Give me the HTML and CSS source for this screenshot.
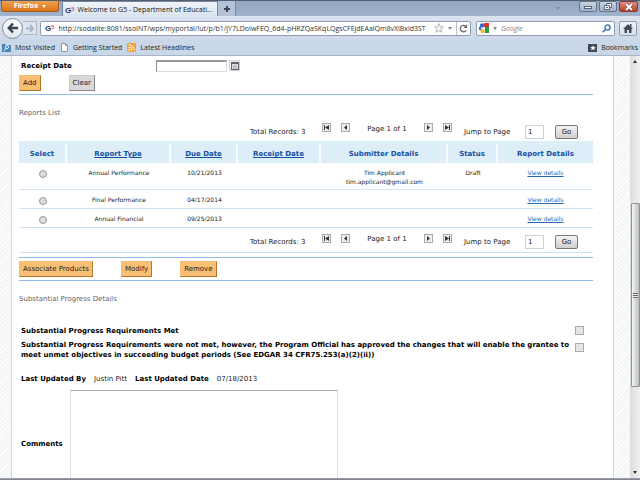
FILE: index.html
```html
<!DOCTYPE html>
<html lang="en">
<head>
  <meta charset="utf-8">
  <title>Welcome to G5 - Department of Education</title>
  <link rel="stylesheet" href="styles.css">
</head>
<body>
  <!-- browser chrome -->
  <header class="titlebar">
    <button class="firefox">Firefox <span class="caret"></span></button>
    <div class="tab"><span class="g5">G<sup>5</sup></span><span class="tab-title">Welcome to G5 - Department of Educati...</span></div>
    <button class="newtab" aria-label="New tab">
      <svg width="8" height="8" viewBox="0 0 8 8"><path d="M4 1v6M1 4h6" stroke="#3c4654" stroke-width="2"/></svg>
    </button>
    <span class="caret tabs-caret"></span>
    <div class="window-buttons">
      <button aria-label="Minimize"><svg width="10" height="8" viewBox="0 0 10 8"><rect x="1.500" y="3.500" width="7" height="2" fill="#fff" stroke="#596373"/></svg></button>
      <button aria-label="Restore"><svg width="10" height="8" viewBox="0 0 10 8"><path d="M3.500.500h5v4h-5z" fill="#fff" stroke="#596373"/><path d="M1.500 2.500h5v4h-5z" fill="#fff" stroke="#596373"/><path d="M3 4.500h2" stroke="#596373"/></svg></button>
      <button class="close" aria-label="Close"><svg width="10" height="8" viewBox="0 0 10 8"><path d="M2 1l6 6M8 1l-6 6" stroke="#7c332c" stroke-width="3"/><path d="M2 1l6 6M8 1l-6 6" stroke="#fff" stroke-width="2"/></svg></button>
    </div>
  </header>
  <nav class="navbar">
    <button class="back" aria-label="Back"><svg width="12" height="12" viewBox="0 0 12 12"><path d="M6 1.500L1.800 6L6 10.500M2 6h9" fill="none" stroke="#3b434f" stroke-width="2.400"/></svg></button>
    <button class="forward" aria-label="Forward"><svg width="8" height="9" viewBox="0 0 8 9"><path d="M4 1l3 3.500L4 8M0 4.500h6" fill="none" stroke="#a9b4c3" stroke-width="2"/></svg></button>
    <div class="urlbar">
      <span class="g5">G<sup>5</sup></span>
      <input type="text" aria-label="Address" value="http://sodalite:8081/ssoINT/wps/myportal/!ut/p/b1/jY7LDoIwFEQ_6d4-pHRZQaSKqLQgsCFEjdEAaiQm8vXiBxid3ST">
      <svg width="10" height="10" viewBox="0 0 10 10"><path d="M5 .6l1.300 3 3.200.3-2.400 2.200.7 3.200L5 7.600 2.200 9.300l.7-3.200L.5 3.900l3.200-.3z" fill="#f3f3f3" stroke="#a5a9ae" stroke-width=".8"/></svg>
      <span class="caret"></span>
      <button class="reload" aria-label="Reload"><svg width="9" height="9" viewBox="0 0 9 9"><path d="M7.300 6.200A3.200 3.200 0 1 1 6.600 2.200" fill="none" stroke="#5c6168" stroke-width="1.200"/><path d="M8 .5v3.500H4.600z" fill="#5c6168"/></svg></button>
    </div>
    <div class="searchbar">
      <svg width="10" height="10" viewBox="0 0 10 10"><rect width="10" height="10" fill="#fff"/><rect x="5" width="5" height="4" fill="#e0322b"/><rect x="6" y="4" width="4" height="6" fill="#2a9a45"/><circle cx="3" cy="2.500" r="2.200" fill="#2f66c9"/><circle cx="3.500" cy="8" r="2.200" fill="#f3b82c"/><rect y="4" width="2" height="3" fill="#2f66c9"/></svg>
      <span class="caret"></span>
      <input type="text" aria-label="Search" placeholder="Google">
      <svg width="9" height="9" viewBox="0 0 9 9"><circle cx="5.500" cy="3.500" r="2.600" fill="none" stroke="#3a6cb4" stroke-width="1.300"/><path d="M3.500 5.500L.8 8.200" stroke="#3a6cb4" stroke-width="1.600"/></svg>
    </div>
    <button class="home" aria-label="Home"><svg width="10" height="9" viewBox="0 0 10 9"><path d="M5 0l5 5H8.500v4h-2.500V6H4v3H1.500V5H0z" fill="#444b57"/><path d="M7 0h1.500v3H7z" fill="#444b57"/></svg></button>
  </nav>
  <div class="bookmarks">
    <a href="#"><svg width="9" height="9" viewBox="0 0 9 9"><path d="M0 1h3l1 1h5v7H0z" fill="#4c86b8"/><circle cx="5" cy="4" r="1.600" fill="none" stroke="#e8f2fa"/><path d="M4 5L2 8" stroke="#e8f2fa"/></svg>Most Visited</a>
    <a href="#"><svg width="9" height="9" viewBox="0 0 9 9"><path d="M1.500.500h4l2 2v6h-6z" fill="#fff" stroke="#8e98a6"/><path d="M5.500.500v2h2" fill="none" stroke="#8e98a6"/></svg>Getting Started</a>
    <a href="#"><svg width="9" height="9" viewBox="0 0 9 9"><rect width="9" height="9" rx="1" fill="#f0a33c"/><circle cx="2.200" cy="6.800" r=".9" fill="#fff"/><path d="M1.500 4a3.500 3.500 0 0 1 3.500 3.500M1.500 1.700A5.800 5.800 0 0 1 7.300 7.500" fill="none" stroke="#fff"/></svg>Latest Headlines</a>
    <a href="#" class="bookmarks-menu"><svg width="9" height="8" viewBox="0 0 9 8"><rect width="9" height="8" fill="#414b58"/><path d="M5 1.300l.8 1.700 1.900.2-1.400 1.200.4 1.900L5 5.300l-1.700 1 .4-1.900-1.400-1.200 1.900-.2z" fill="#fff"/></svg>Bookmarks</a>
  </div>

  <!-- page -->
  <div class="viewport">
    <main class="page">
      <form class="filter">
        <div class="field">
          <label for="receipt">Receipt Date</label>
          <input type="text" id="receipt">
          <button type="button" class="calendar" aria-label="Pick date"><svg width="8" height="8" viewBox="0 0 8 8"><rect x=".5" y=".5" width="7" height="7" fill="#ddd" stroke="#666"/><path d="M0 1h8" stroke="#666" stroke-width="2"/><path d="M2 4h4M2 6h4" stroke="#aaa"/></svg></button>
        </div>
        <div class="actions">
          <button type="button" class="btn">Add</button>
          <button type="button" class="btn gray">Clear</button>
        </div>
      </form>

      <h2 class="reports-title">Reports List</h2>
      <div class="pager">
        <span class="total">Total Records: 3</span>
        <div class="steps">
          <button aria-label="First page"><svg width="7" height="7" viewBox="0 0 7 7"><path d="M1 1h1v5H1zM6 1v5L2 3.500z" fill="#333"/></svg></button>
          <button aria-label="Previous page"><svg width="7" height="7" viewBox="0 0 7 7"><path d="M5 1v5L2 3.500z" fill="#333"/></svg></button>
          <span>Page 1 of 1</span>
          <button aria-label="Next page"><svg width="7" height="7" viewBox="0 0 7 7"><path d="M2 1v5l3-2.500z" fill="#333"/></svg></button>
          <button aria-label="Last page"><svg width="7" height="7" viewBox="0 0 7 7"><path d="M5 1h1v5H5zM1 1v5l4-2.500z" fill="#333"/></svg></button>
        </div>
        <label for="jump-top">Jump to Page</label>
        <input type="text" id="jump-top" value="1">
        <button class="go">Go</button>
      </div>
      <table class="reports">
        <thead>
          <tr>
            <th class="c-select"><span>Select</span></th>
            <th class="c-type"><span><a href="#">Report Type</a></span></th>
            <th class="c-due"><span><a href="#">Due Date</a></span></th>
            <th class="c-receipt"><span><a href="#">Receipt Date</a></span></th>
            <th class="c-submitter"><span>Submitter Details</span></th>
            <th class="c-status"><span>Status</span></th>
            <th><span>Report Details</span></th>
          </tr>
        </thead>
        <tbody>
          <tr>
            <td><input type="radio" name="report" aria-label="Annual Performance"></td>
            <td>Annual Performance</td><td>10/21/2013</td><td></td>
            <td>Tim Applicant<br>tim.applicant@gmail.com</td><td>Draft</td>
            <td><a href="#">View details</a></td>
          </tr>
          <tr>
            <td><input type="radio" name="report" aria-label="Final Performance"></td>
            <td>Final Performance</td><td>04/17/2014</td><td></td><td></td><td></td>
            <td><a href="#">View details</a></td>
          </tr>
          <tr>
            <td><input type="radio" name="report" aria-label="Annual Financial"></td>
            <td>Annual Financial</td><td>09/25/2013</td><td></td><td></td><td></td>
            <td><a href="#">View details</a></td>
          </tr>
        </tbody>
      </table>
      <div class="pager pager-bottom">
        <span class="total">Total Records: 3</span>
        <div class="steps">
          <button aria-label="First page"><svg width="7" height="7" viewBox="0 0 7 7"><path d="M1 1h1v5H1zM6 1v5L2 3.500z" fill="#333"/></svg></button>
          <button aria-label="Previous page"><svg width="7" height="7" viewBox="0 0 7 7"><path d="M5 1v5L2 3.500z" fill="#333"/></svg></button>
          <span>Page 1 of 1</span>
          <button aria-label="Next page"><svg width="7" height="7" viewBox="0 0 7 7"><path d="M2 1v5l3-2.500z" fill="#333"/></svg></button>
          <button aria-label="Last page"><svg width="7" height="7" viewBox="0 0 7 7"><path d="M5 1h1v5H5zM1 1v5l4-2.500z" fill="#333"/></svg></button>
        </div>
        <label for="jump-bottom">Jump to Page</label>
        <input type="text" id="jump-bottom" value="1">
        <button class="go">Go</button>
      </div>
      <div class="actions table-actions">
        <button class="btn">Associate Products</button>
        <button class="btn">Modify</button>
        <button class="btn">Remove</button>
      </div>

      <h2 class="progress-title">Substantial Progress Details</h2>
      <form class="progress">
        <div class="check">
          <label for="met">Substantial Progress Requirements Met</label>
          <input type="checkbox" id="met">
        </div>
        <div class="check">
          <label for="notmet">Substantial Progress Requirements were not met, however, the Program Official has approved the changes that will enable the grantee to<br>meet unmet objectives in succeeding budget periods (See EDGAR 34 CFR75.253(a)(2)(ii))</label>
          <input type="checkbox" id="notmet">
        </div>
        <p class="updated"><b>Last Updated By</b><span>Justin Pitt</span><b>Last Updated Date</b><span>07/18/2013</span></p>
        <div class="comments">
          <label for="comments">Comments</label>
          <textarea id="comments"></textarea>
        </div>
      </form>
    </main>
    <div class="scrollbar">
      <span class="arrow up"></span>
      <div class="thumb"><i></i></div>
      <span class="arrow down"></span>
    </div>
  </div>
  <div class="taskbar"></div>
</body>
</html>
```

FILE: styles.css
```css
* { box-sizing: border-box; }

body {
  margin: 0;
  height: 100vh;
  display: flex;
  flex-direction: column;
  overflow: hidden;
  font: 7px/10px "DejaVu Sans", Verdana, sans-serif;
  color: #222;
  background: #fff;
}

button, input, textarea {
  font: inherit;
  color: inherit;
  margin: 0;
  padding: 0;
}

button {
  display: flex;
  align-items: center;
  justify-content: center;
  flex: none;
}

svg { flex: none; }

/* browser chrome */
.titlebar, .navbar, .bookmarks {
  display: flex;
  flex: none;
  font-family: "Open Sans", sans-serif;
}

.titlebar {
  height: 16px;
  padding: 0 2px 0 1px;
  border-top: 1px solid #535e70;
  background: linear-gradient(#93a6c0, #a0b3cc);
}

.firefox {
  width: 58px;
  height: 11px;
  margin-right: 3px;
  gap: 4px;
  border: 1px solid #a9591b;
  border-top: 0;
  border-radius: 0 0 3px 3px;
  background: linear-gradient(#eda14e, #dc7416);
  color: #fff;
  font-weight: bold;
}

.caret {
  flex: none;
  border: 2px solid transparent;
  border-top: 3px solid #808894;
  border-bottom: 0;
}

.firefox .caret { border-top-color: #fff; }

.tab {
  display: flex;
  align-items: center;
  width: 156px;
  padding: 2px 2px 0;
  gap: 3px;
  border: 1px solid #7487a1;
  border-bottom: 0;
  background: linear-gradient(#f1f5fa, #dae3ef);
  color: #111;
  white-space: nowrap;
}

.g5 {
  display: flex;
  flex: none;
  font: bold 8px/9px "Liberation Sans", sans-serif;
  color: #1d3a6e;
}

.g5 sup {
  font-size: 6px;
  line-height: 6px;
  color: #e8642c;
}

.newtab {
  width: 18px;
  border: 1px solid #7487a1;
  border-width: 0 1px 0 0;
  background: #b3c2d6;
}

.tabs-caret { margin: 6px 19px 0 auto; }

.window-buttons {
  display: flex;
  gap: 2px;
}

.window-buttons button {
  width: 18px;
  height: 11px;
  border: 1px solid #66758c;
  border-radius: 2px;
  background: linear-gradient(#c9d5e4, #9fb0c7);
}

.window-buttons .close {
  width: 19px;
  border-color: #843a32;
  background: linear-gradient(#dd9384, #b83d28);
}

.navbar {
  height: 24px;
  align-items: center;
  padding: 0 3px 0 2px;
  background: linear-gradient(#dae3ef, #cdd9e9);
}

.back {
  width: 21px;
  height: 21px;
  border: 1px solid #7f8c9e;
  border-radius: 50%;
  background: linear-gradient(#fff, #dfe5ed);
}

.forward {
  width: 14px;
  height: 14px;
  margin-right: 3px;
  border: 1px solid #aeb9c8;
  border-left: 0;
  background: #dde5ef;
}

.urlbar, .searchbar {
  display: flex;
  align-items: center;
  height: 15px;
  border: 1px solid #919dae;
  border-radius: 2px;
  background: #fff;
}

.urlbar {
  flex: 1;
  gap: 4px;
  padding-left: 4px;
}

.urlbar input, .searchbar input {
  flex: 1;
  min-width: 0;
  height: 12px;
  border: 0;
  background: none;
}

.urlbar input { color: #333; }

.reload {
  width: 14px;
  height: 13px;
  border: 0;
  border-left: 1px solid #b9c0c9;
  background: none;
}

.searchbar {
  width: 139px;
  margin: 0 4px 0 5px;
  padding: 0 3px 0 2px;
  gap: 4px;
}

.searchbar input::placeholder {
  color: #808080;
  font-style: italic;
  opacity: 1;
}

.home {
  width: 18px;
  height: 15px;
  border: 1px solid #919dae;
  border-radius: 2px;
  background: linear-gradient(#f3f6fa, #d5deea);
}

.bookmarks {
  height: 16px;
  align-items: center;
  padding: 0 2px;
  gap: 5px;
  border-bottom: 1px solid #a9b4c6;
  background: #cad7e8;
}

.bookmarks a {
  display: flex;
  align-items: center;
  gap: 4px;
  color: #222;
  text-decoration: none;
}

.bookmarks .bookmarks-menu { margin-left: auto; }

/* page */
.viewport {
  flex: 1;
  min-height: 0;
  display: flex;
  background: repeating-linear-gradient(135deg, #fff 0 1px, #f3f6f7 1px 3px);
}

.page {
  flex: 1;
  min-width: 0;
  margin: 0 16px 0 11px;
  padding: 3px 20px 0 7px;
  border: 1px solid #ccd9ec;
  border-width: 0 1px;
  overflow: hidden;
  background: #fff;
}

.field {
  display: flex;
  align-items: center;
  gap: 2px;
  height: 13px;
  padding-left: 2px;
}

.field label, .check label, .comments label, .updated b {
  font-weight: bold;
  color: #000;
}

.field label { width: 133px; }

.field input {
  width: 71px;
  height: 12px;
  border: 1px solid #ddd;
  border-top: 2px solid #999;
  border-left: 1px solid #888;
}

.calendar {
  width: 11px;
  height: 11px;
  border: 1px solid #c8d4e4;
  background: #eef2f8;
}

.actions {
  display: flex;
  gap: 28px;
  padding: 3px 0;
  border-bottom: 1px solid #8fbce6;
}

.btn {
  height: 16px;
  padding: 0 3px;
  border: 1px solid #f3bd77;
  border-right-color: #b0772c;
  border-bottom-color: #b0772c;
  background: #f9bf72;
}

.gray {
  border-color: #ccc;
  border-right-color: #888;
  border-bottom-color: #888;
  background: #d8d8d8;
}

h2 {
  margin: 0;
  font-size: 7px;
  line-height: 10px;
  font-weight: normal;
  color: #666;
}

.reports-title { padding: 13px 0 4px; }

.pager {
  display: flex;
  align-items: center;
  height: 19px;
  padding: 0 15px 0 231px;
}

.total { width: 72px; }

.steps {
  display: flex;
  align-items: center;
  justify-content: space-between;
  width: 130px;
  margin: 0 12px 8px 0;
}

.steps span { padding: 2px 8px 0; }

.steps button {
  width: 9px;
  height: 9px;
  border: 1px solid #aaa;
  background: #eee;
}

.pager label { margin-right: auto; }

.pager input {
  width: 19px;
  height: 14px;
  margin-right: 11px;
  padding-left: 2px;
  border: 1px solid #ccd0dc;
}

.go {
  width: 23px;
  height: 14px;
  border: 1px solid #777;
  border-radius: 2px;
  background: linear-gradient(#f4f4f4, #cfcfcf);
}

.reports {
  width: 100%;
  table-layout: fixed;
  border-collapse: collapse;
  font-size: 6px;
  line-height: 9px;
  text-align: center;
}

.reports th {
  padding: 3px 0 0;
  background: #ddeef9;
  color: #1350a0;
  font-size: 7px;
}

.reports th span {
  display: block;
  height: 19px;
  padding-top: 6px;
  border-right: 2px solid #f8fbfd;
}

.reports th:last-child span { border-right: 0; }

.reports th a { color: inherit; }

.c-select { width: 48px; }
.c-type { width: 104px; }
.c-due { width: 67px; }
.c-receipt { width: 83px; }
.c-submitter { width: 127px; }
.c-status { width: 50px; }

.reports td {
  padding: 5px 0 2px;
  height: 19px;
  vertical-align: top;
  border-bottom: 1px solid #d0e3f4;
}

.reports tbody tr:first-child td {
  height: 26px;
}

.reports td a { color: #2a67ad; }

.reports input {
  display: block;
  appearance: none;
  width: 8px;
  height: 8px;
  margin: 2px auto 0;
  border: 1px solid #999;
  border-radius: 50%;
  background: #ddd;
}

.pager-bottom {
  height: 25px;
  padding-top: 5px;
  border-bottom: 1px solid #d0e3f4;
}

.table-actions {
  margin-top: 4px;
  border-top: 1px solid #8fbce6;
}

.progress-title { padding: 13px 0 22px; }

.progress { padding-left: 2px; }

.check {
  display: flex;
  align-items: flex-start;
  justify-content: space-between;
  padding: 0 9px 4px 0;
  white-space: nowrap;
}

.check input {
  appearance: none;
  width: 9px;
  height: 9px;
  margin: 0;
  border: 1px solid #aaa;
  background: #e4e4e8;
}

.check + .check input { margin-top: 3px; }

.updated {
  display: flex;
  gap: 8px;
  margin: 10px 0 6px;
}

.comments {
  display: flex;
  align-items: center;
}

.comments label { width: 49px; }

.comments textarea {
  width: 268px;
  height: 108px;
  border: 1px solid #e0e0e4;
  border-top-color: #aaabb4;
  resize: none;
}

/* scrollbar */
.scrollbar {
  display: flex;
  flex-direction: column;
  align-items: center;
  width: 10px;
  padding: 4px 0;
  background: linear-gradient(90deg, #dcdcdc, #f0f0f0);
}

.arrow {
  border: 2px solid transparent;
}

.up { border-top: 0; border-bottom: 3px solid #333; }
.down { border-bottom: 0; border-top: 3px solid #333; }

.thumb {
  display: flex;
  align-items: center;
  justify-content: center;
  width: 9px;
  height: 184px;
  margin: 140px 0 auto;
  border: 1px solid #8f9296;
  border-radius: 1px;
  background: linear-gradient(90deg, #f5f5f5, #b9bdc2);
}

.thumb i {
  width: 5px;
  height: 5px;
  background: repeating-linear-gradient(#666 0 1px, #eee 1px 2px);
}

.taskbar {
  flex: none;
  height: 2px;
  background: linear-gradient(#a4a8b0, #757b88);
}
```
